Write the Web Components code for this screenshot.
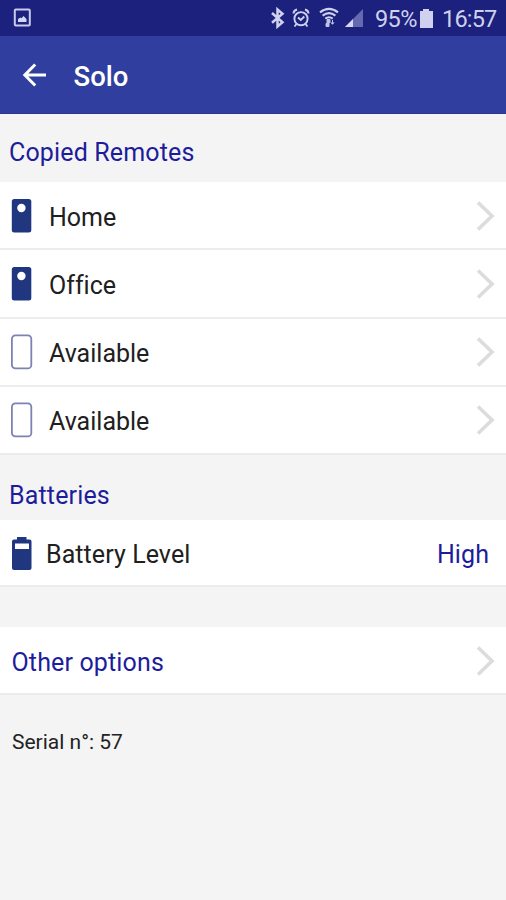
<!DOCTYPE html>
<html lang="en">
<head>
<meta charset="utf-8">
<title>Solo</title>
<style>
html,body{margin:0;height:100%;background:#f4f4f4}
body{font-family:Roboto,"Liberation Sans",sans-serif;overflow:hidden}
</style>
</head>
<body>
<solo-screen></solo-screen>
<script>
function element(name, html) {
  const t = document.createElement('template');
  t.innerHTML = html;
  customElements.define(name, class extends HTMLElement {
    constructor() {
      super();
      this.attachShadow({ mode: 'open' }).append(t.content.cloneNode(true));
    }
  });
}

element('status-bar', `
<style>
:host{display:flex;align-items:center;height:36px;box-sizing:border-box;padding:0 10px 0 13px;background:#1b217c;color:#cfd1ee;font-size:23.500px}
svg{display:block;flex:none}
.gap{flex:1}
span{line-height:36px;white-space:nowrap;padding-top:2px}
.pct{width:43px;letter-spacing:-.6px}
.time{width:54px;letter-spacing:-.8px}
</style>
<svg width="18" height="20" viewBox="0 0 18 20"><rect x="1.800" y="1.600" width="15" height="16" rx="1" fill="none" stroke="#c9cbee" stroke-width="2"/><path d="M5 14v-3l2.500-1.500 1 .8 2-2.300 3 3V14z" fill="#d5d7f2"/></svg>
<div class="gap"></div>
<svg width="103" height="24" viewBox="268 6 103 24" fill="none" stroke="#cfd1ee">
<path d="M271 13l10.500 9.300-5 4.200V9.500l5 4.200-10.500 9" stroke-width="2.500"/>
<g stroke-width="1.900"><circle cx="300" cy="18.700" r="6.600"/><path d="M292.500 13.500q0-3 3.500-4M304 9.500q3.500 1 3.500 4M295.500 24l-2 2.500M304.500 24l2 2.500M297 17.500l2.800 2.500 3.500-3.500"/></g>
<g stroke-width="2.100"><path d="M319 12.400q9-7 18 0M321.600 15.600q6.400-4.800 12.800 0M324.300 18.600q3.700-2.600 7.400 0"/></g>
<path d="M326 19.500h3v3h-1v4h-3v-3h1zM331.500 20v4M330 22.500l1.500 1.800 1.500-1.800" fill="#bfc2e6" stroke-width="1" stroke="#bfc2e6"/>
<path d="M362 9v18h-18z" fill="#656ab0" stroke="none"/><path d="M352 19v8h-8z" fill="#d5d7f2" stroke="none"/>
</svg>
<span class="pct" style="margin-left:3px">95%</span>
<svg width="15" height="22" viewBox="0 0 15 22" style="margin:0 8px 0 1px"><path d="M4 2h6v2h4v17H1V4h3z" fill="#cfd1ee"/></svg>
<span class="time">16:57</span>
`);

element('app-bar', `
<style>
:host{display:flex;align-items:center;height:78px;box-sizing:border-box;padding-left:22px;background:#303f9f;border-bottom:1px solid #2a3792;color:#fff;font-size:27.500px;font-weight:500}
svg{display:block;margin-right:26.500px}
span{padding-top:4px}
</style>
<svg width="25" height="26" viewBox="0 0 25 26" fill="none" stroke="#fff" stroke-width="3"><path d="M24 13H3M13.200 2.500L2.800 13l10.400 10.500"/></svg>
<span><slot></slot></span>
`);

element('section-title', `
<style>
:host{display:flex;align-items:center;box-sizing:border-box;height:68px;padding:9px 0 0 9px;font-size:25px;font-weight:370;letter-spacing:.15px;color:#1d1d9c}
</style><slot></slot>
`);

element('list-row', `
<style>
:host{display:flex;align-items:center;box-sizing:border-box;height:68.250px;padding:1px 11px 0 10px;background:#fff;border-bottom:2px solid #ececec;font-size:25px;font-weight:370;color:#202020}
.label{flex:1;white-space:nowrap;padding-top:3px}
</style>
<slot name="icon"></slot><span class="label"><slot></slot></span><slot name="end"></slot>
`);

element('icon-remote', `
<style>:host{display:block;width:39px;height:36px}svg{display:block}</style>
<svg width="24" height="36" viewBox="0 0 24 36"><rect x="1.800" y="1" width="19.500" height="33.500" rx="2.500" fill="#20367e"/><circle cx="11.400" cy="10" r="4.200" fill="#fff"/></svg>
`);
element('icon-empty', `
<style>:host{display:block;width:39px;height:36px}svg{display:block}</style>
<svg width="24" height="36" viewBox="0 0 24 36"><rect x="1.900" y="1.400" width="19.400" height="33" rx="3.500" fill="none" stroke="#7d82b3" stroke-width="1.800"/></svg>
`);
element('icon-battery', `
<style>:host{display:block;width:36px;height:36px}svg{display:block}</style>
<svg width="24" height="36" viewBox="0 0 24 36"><path d="M7 2h9.500v2.500h3q2 0 2 2V33q0 2-2 2h-15.500q-2 0-2-2V6.500q0-2 2-2h3z" fill="#20367e"/><path d="M5 8.500h14v5.500H5z" fill="#fff"/></svg>
`);
element('icon-chevron', `
<style>:host{display:block}svg{display:block}</style>
<svg width="20" height="32" viewBox="0 0 20 32"><path d="M3 2.500L17 16 3 29.500" fill="none" stroke="#dcdcdc" stroke-width="3.600"/></svg>
`);

element('solo-screen', `
<style>
:host{display:block;width:506px;height:900px;background:#f4f4f4}
.office{letter-spacing:.01px}
.batteries{height:65px;padding-top:16px}
.level{height:67px;margin-bottom:40px;letter-spacing:.08px}
.value{color:#1d1d9c;padding:3px 6px 0 0}
.options{color:#1d1d9c;padding-left:11.500px;height:68px;letter-spacing:.14px}
.serial{padding:34px 0 0 12px;font-size:21px;line-height:26px;color:#222}
</style>
<status-bar></status-bar>
<app-bar>Solo</app-bar>
<section-title>Copied Remotes</section-title>
<list-row><icon-remote slot="icon"></icon-remote>Home<icon-chevron slot="end"></icon-chevron></list-row>
<list-row class="office"><icon-remote slot="icon"></icon-remote>Office<icon-chevron slot="end"></icon-chevron></list-row>
<list-row><icon-empty slot="icon"></icon-empty>Available<icon-chevron slot="end"></icon-chevron></list-row>
<list-row><icon-empty slot="icon"></icon-empty>Available<icon-chevron slot="end"></icon-chevron></list-row>
<section-title class="batteries">Batteries</section-title>
<list-row class="level"><icon-battery slot="icon"></icon-battery>Battery Level<span class="value" slot="end">High</span></list-row>
<list-row class="options">Other options<icon-chevron slot="end"></icon-chevron></list-row>
<div class="serial">Serial n°: 57</div>
`);
</script>
</body>
</html>
